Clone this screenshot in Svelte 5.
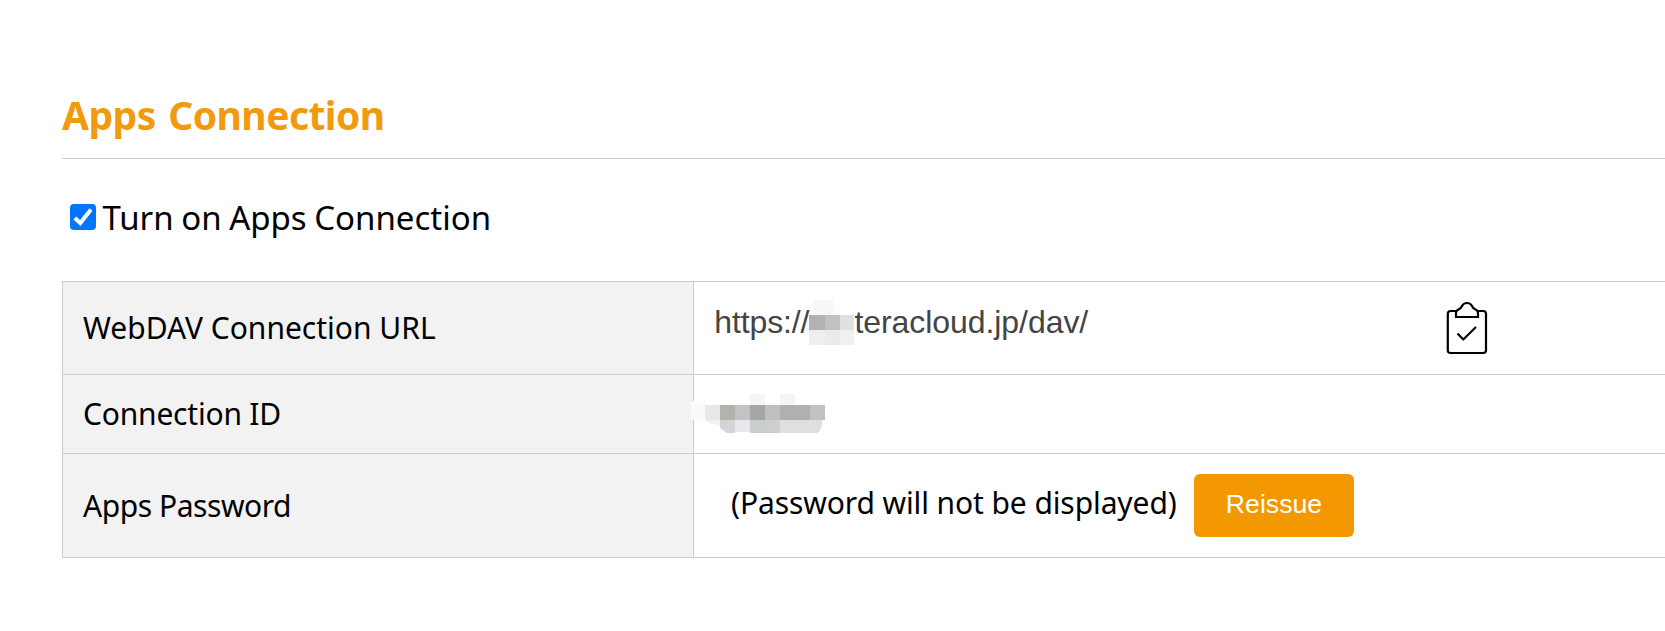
<script>
  let enabled = $state(true);
  const urlBlocks = [
    [813, 300, 20, 15, '#f6f6f6'],
    [833, 304, 7, 11, '#fbfbfb'],
    [809, 315, 16, 15, '#b3b1b2'],
    [825, 315, 15, 15, '#c4c0c0'],
    [840, 315, 15, 15, '#e0e0e3'],
    [809, 330, 16, 15, '#eeeeee'],
    [825, 330, 15, 15, '#ebebeb'],
    [840, 330, 15, 15, '#f0f0f0'],
  ];
  const idBlocks = [
    [691, 401, 14, 19, '#fafafa'],
    [750, 394, 15, 11, '#f5f5f5'],
    [780, 394, 15, 11, '#f6f6f6'],
    [705, 405, 15, 15, '#e8e8e4'],
    [720, 405, 15, 15, '#b2b2ae'],
    [735, 405, 15, 15, '#c1c3c4'],
    [750, 405, 15, 15, '#a4a7a7'],
    [765, 405, 15, 15, '#bfbfbf'],
    [780, 405, 15, 15, '#b0b0b0'],
    [795, 405, 15, 15, '#b0b0ae'],
    [810, 405, 15, 15, '#bfc2c4'],
    [735, 420, 15, 12, '#e6e8eb'],
    [750, 420, 15, 13, '#cccdcf'],
    [765, 420, 15, 13, '#cecece'],
  ];
</script>

<main>
  <h1>Apps Connection</h1>
  <label class="toggle">
    <input type="checkbox" bind:checked={enabled} />
    <svg class="box" width="26" height="26" viewBox="0 0 26 26">
      <rect width="26" height="26" rx="4" fill="#0075ff" />
      {#if enabled}<path d="M4.800 14L10.300 19L21 5.500" fill="none" stroke="#fff" stroke-width="4" />{/if}
    </svg>
    <span class="turn">Turn on Apps Connection</span>
  </label>

  <div class="table">
    <div class="row first">
      <div class="head"><span>WebDAV Connection URL</span></div>
      <div class="cell url">
        <span class="scheme">https://</span>
        <svg class="mask" width="45" height="45" viewBox="809 300 45 45" shape-rendering="crispEdges">
          {#each urlBlocks as [x, y, w, h, c]}<rect {x} {y} width={w} height={h} fill={c} />{/each}
        </svg>
        <span class="host">teracloud.jp/dav/</span>
        <svg class="clip" width="42" height="54" viewBox="0 0 42 54" fill="none" stroke="#000" stroke-width="2.2" stroke-linejoin="round">
          <path d="M10 10H4.500Q1.800 10 1.800 12.700V49.300Q1.800 52 4.500 52H37.300Q40 52 40 49.300V12.700Q40 10 37.300 10H32" />
          <path stroke-linejoin="miter" d="M10 16V12Q10 9.500 12.500 8.500Q15 7.500 16 5Q17.500 2 21 2Q24.500 2 26 5Q27 7.500 29.500 8.500Q32 9.500 32 12V16Z" />
          <path d="M11.500 32.500L17.300 38.500L30 26" />
        </svg>
      </div>
    </div>
    <div class="row second">
      <div class="head"><span class="id">Connection ID</span></div>
      <div class="cell">
        <svg class="idmask" width="136" height="40" viewBox="690 394 136 40">
          <path d="M705 420H720V425Q709 424 705 420Z" fill="#f0f0ed" />
          <path d="M720 420H735V433H727L720 428Z" fill="#d4d4d6" />
          <path d="M780 420H822.500Q821 433 817 433H780Z" fill="#dfdfdf" />
          {#each idBlocks as [x, y, w, h, c]}<rect {x} {y} width={w} height={h} fill={c} shape-rendering="crispEdges" />{/each}
        </svg>
      </div>
    </div>
    <div class="row third">
      <div class="head"><span class="pw">Apps Password</span></div>
      <div class="cell pass">
        <span class="note">(Password will not be displayed)</span>
        <button>Reissue</button>
      </div>
    </div>
  </div>
</main>

<style>
  :global(body) { margin: 0; background: #fff; overflow: hidden; }
  main {
    box-sizing: border-box;
    height: 631px;
    padding: 80px 0 0 62px;
    overflow: hidden;
    font-family: 'Noto Sans', 'Open Sans', sans-serif;
    color: #000;
    white-space: nowrap;
  }
  h1 {
    box-sizing: border-box;
    height: 79px;
    margin: 0;
    padding-top: 4px;
    border-bottom: 1px solid #ccc;
    color: #f19a0e;
    font-size: 39px;
    line-height: 62px;
    font-weight: 700;
    letter-spacing: -0.55px;
    word-spacing: 3px;
  }
  .toggle { display: flex; align-items: center; height: 40px; margin: 38px 0 0 8px; }
  .toggle input { position: absolute; opacity: 0; }
  .turn { margin: 2px 0 0 6.5px; font-size: 33px; line-height: 40px; letter-spacing: 0; word-spacing: -1px; }
  .table { margin-top: 44px; border: 1px solid #ccc; border-right: 0; }
  .row { display: grid; grid-template-columns: 631px 1fr; border-bottom: 1px solid #ccc; }
  .row:last-child { border-bottom: 0; }
  .first { height: 92px; }
  .second { height: 78px; }
  .third { height: 103px; }
  .head {
    display: flex;
    align-items: center;
    padding-left: 20px;
    background: #f2f2f2;
    border-right: 1px solid #ccc;
    font-size: 30px;
  }
  .first .head, .second .head { padding-bottom: 2px; }
  .id { letter-spacing: -0.2px; }
  .pw { letter-spacing: -0.45px; }
  .cell { display: flex; align-items: center; }
  .url {
    align-items: flex-start;
    padding: 18px 0 0 20.3px;
    color: #444;
    font-family: 'Liberation Sans', Arial, sans-serif;
    font-size: 32px;
    line-height: 44px;
  }
  .scheme { letter-spacing: -0.12px; }
  .host { letter-spacing: -0.06px; }
  .clip { margin: 1px 0 0 357.6px; }
  .idmask { margin-left: -4px; }
  .pass { padding-left: 37px; }
  .note { width: 463px; font-size: 30px; margin-top: -6px; letter-spacing: -0.1px; }
  button {
    width: 160px;
    height: 63px;
    padding: 0 0 2px;
    border: 0;
    border-radius: 6px;
    background: #f39800;
    color: #fff;
    font: 26.67px 'Liberation Sans', Arial, sans-serif;
  }
</style>
